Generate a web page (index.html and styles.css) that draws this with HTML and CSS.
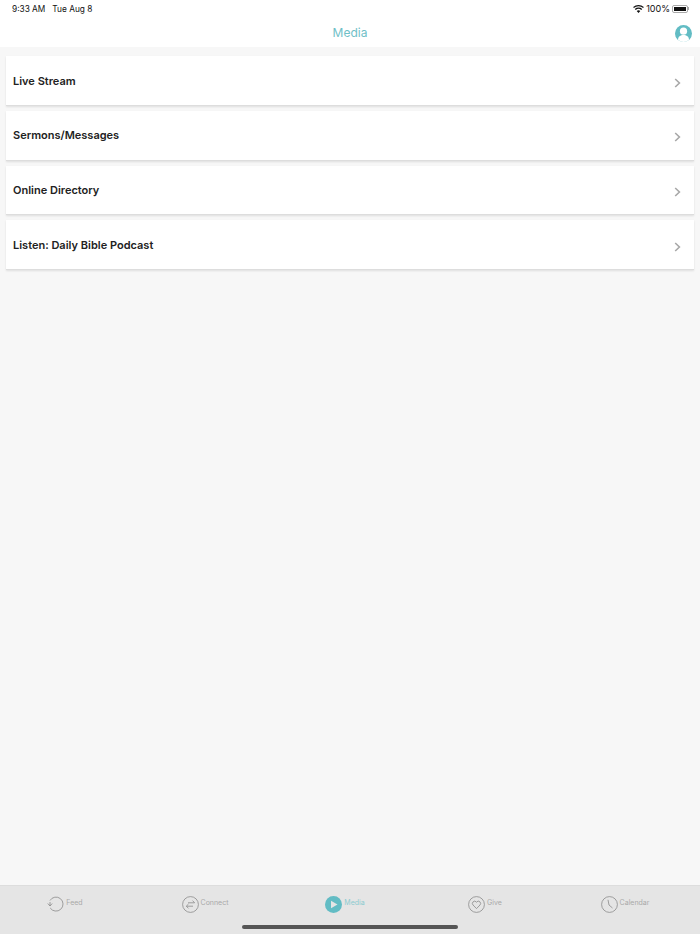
FILE: index.html
```html
<!DOCTYPE html>
<html lang="en">
<head>
  <meta charset="UTF-8" />
  <meta name="viewport" content="width=device-width, initial-scale=1.0" />
  <title>Media</title>
  <link rel="stylesheet" href="styles.css">
</head>
<body>
  <div class="app">
    <div class="status-bar">
      <div class="status-time"><span>9:33 AM</span><span>Tue Aug 8</span></div>
      <div class="status-right">
        <svg class="wifi" width="11" height="8" viewBox="0 0 12 9"><path d="M6 9 4 6.8a3 3 0 0 1 4 0zM2.9 5.700 1.800 4.500a6.200 6.200 0 0 1 8.400 0L9.100 5.700a4.600 4.600 0 0 0-6.200 0zM.8 3.400 0 2.300a9 9 0 0 1 12 0l-.8 1.100a7.700 7.700 0 0 0-10.400 0z" fill="#111"/></svg>
        <span>100%</span>
        <div class="battery"><div class="battery-fill"></div></div>
        <div class="battery-cap"></div>
      </div>
    </div>

    <header class="title-bar">
      <h1>Media</h1>
      <svg class="profile" width="17" height="17" viewBox="0 0 17 17">
        <circle cx="8.500" cy="8.500" r="8.500" fill="#62bcc4"/>
        <circle cx="8.500" cy="6.200" r="3.600" fill="#fff"/>
        <path d="M3 14.800c0-3.300 2.500-4.800 5.500-4.800s5.500 1.500 5.500 4.800a8 8 0 0 1-11 0z" fill="#fff"/>
      </svg>
    </header>

    <main class="menu">
      <a class="menu-item"><span>Live Stream</span><svg class="chevron" width="7" height="10" viewBox="0 0 7 10"><path d="M1.200 1 5.400 5 1.200 9" /></svg></a>
      <a class="menu-item"><span>Sermons/Messages</span><svg class="chevron" width="7" height="10" viewBox="0 0 7 10"><path d="M1.200 1 5.400 5 1.200 9" /></svg></a>
      <a class="menu-item"><span>Online Directory</span><svg class="chevron" width="7" height="10" viewBox="0 0 7 10"><path d="M1.200 1 5.400 5 1.200 9" /></svg></a>
      <a class="menu-item"><span>Listen: Daily Bible Podcast</span><svg class="chevron" width="7" height="10" viewBox="0 0 7 10"><path d="M1.200 1 5.400 5 1.200 9" /></svg></a>
    </main>

    <nav class="tab-bar">
      <div class="tab tab-feed">
        <svg width="17" height="16" viewBox="0 0 17 16"><path d="M3 4.500A7 7 0 1 1 3.200 12" /><path d="M.8 7.500 3 10l2.200-2.500M3 10V6" /></svg>
        <span>Feed</span>
      </div>
      <div class="tab tab-connect">
        <svg width="17" height="17" viewBox="0 0 17 17"><circle cx="8.500" cy="8.500" r="7.900"/><path d="M6 6.800h6.500M10.500 4.600l2.200 2.200M11 10.200H4.500M6.500 8 4.300 10.200 6.500 12.400"/></svg>
        <span>Connect</span>
      </div>
      <div class="tab tab-media active">
        <svg width="17" height="17" viewBox="0 0 17 17"><circle class="solid" cx="8.500" cy="8.500" r="8.500"/><path class="play" d="M6 4.800 12.500 8.500 6 12.200z"/></svg>
        <span>Media</span>
      </div>
      <div class="tab tab-give">
        <svg width="17" height="17" viewBox="0 0 17 17"><circle cx="8.500" cy="8.500" r="7.900"/><path d="M8.500 12.600 5 9a2.300 2.300 0 0 1 0-3.100 2.300 2.300 0 0 1 3.500.3 2.300 2.300 0 0 1 3.500-.3 2.300 2.300 0 0 1 0 3.100z"/></svg>
        <span>Give</span>
      </div>
      <div class="tab tab-calendar">
        <svg width="17" height="17" viewBox="0 0 17 17"><circle cx="8.500" cy="8.500" r="7.900"/><path d="M7 3.800 8 9l3.500 3"/></svg>
        <span>Calendar</span>
      </div>
      <div class="home-indicator"></div>
    </nav>
  </div>
</body>
</html>
```

FILE: styles.css
```css
* {
  box-sizing: border-box;
}
body {
  font-family: Inter, "Liberation Sans", sans-serif;
  margin: 0;
  background: #f7f7f7;
  color: #222;
}
.app {
  display: flex;
  flex-direction: column;
  width: 700px;
  height: 934px;
  overflow: hidden;
}
.status-bar {
  display: flex;
  justify-content: space-between;
  align-items: center;
  height: 17px;
  padding: 0 11px 0 12px;
  background: #fff;
  font-size: 8.3px;
  color: #111;
}
.status-time {
  display: flex;
  gap: 7px;
}
.status-right {
  display: flex;
  align-items: center;
  gap: 2px;
  font-size: 9px;
}
.battery {
  width: 16px;
  height: 8px;
  padding: 1px;
  border: 1px solid #aaa;
  border-radius: 2px;
}
.battery-fill {
  height: 100%;
  background: #111;
}
.battery-cap {
  width: 1px;
  height: 3px;
  margin-left: -2px;
  background: #aaa;
}
.title-bar {
  position: relative;
  display: flex;
  justify-content: center;
  align-items: center;
  height: 30px;
  background: #fff;
}
.title-bar h1 {
  margin: 0;
  font-size: 12px;
  font-weight: 400;
  color: #6fc0c7;
}
.profile {
  position: absolute;
  right: 8px;
  top: 8px;
}
.menu {
  flex: 1;
  display: flex;
  flex-direction: column;
  gap: 5px;
  padding: 9.33px 6px 0;
}
.menu-item {
  display: flex;
  justify-content: space-between;
  align-items: center;
  height: 49.67px;
  padding: 0 13px 0 7px;
  background: #fff;
  border-bottom: 1px solid #ddd;
  box-shadow: 0 1px 2px rgba(0, 0, 0, 0.1);
  font-size: 11px;
  font-weight: 600;
}
.chevron {
  margin-top: 4px;
  fill: none;
  stroke: #a8a8a8;
  stroke-width: 1.6;
}
.tab-bar {
  position: relative;
  display: flex;
  height: 49px;
  padding-top: 10px;
  background: #e5e5e5;
  border-top: 1px solid #ddd;
}
.tab {
  flex: 0 0 140px;
  display: flex;
  justify-content: center;
  align-items: flex-start;
  gap: 2px;
  padding-right: 10px;
  font-size: 7px;
  color: #a9a9a9;
}
.tab span {
  line-height: 14px;
}
.tab svg {
  fill: none;
  stroke: #8a8a8a;
  stroke-width: 0.8;
}
.tab.active {
  color: #8ccbd0;
}
.tab svg .solid {
  fill: #62bcc4;
  stroke: none;
}
.tab svg .play {
  fill: #e5e5e5;
  stroke: none;
}
.home-indicator {
  position: absolute;
  left: 242px;
  bottom: 5px;
  width: 216px;
  height: 4px;
  border-radius: 2px;
  background: #555;
}
```
